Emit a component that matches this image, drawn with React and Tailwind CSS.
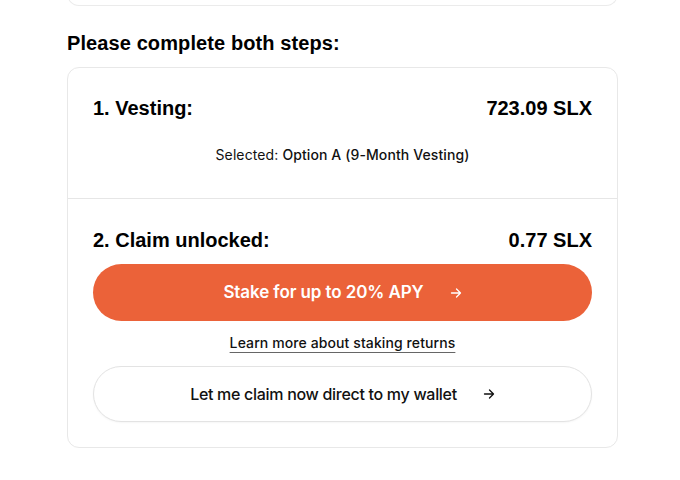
import React from 'react';

function Arrow({ className }) {
  return (
    <svg viewBox="0 0 12 12" className={className} fill="none" stroke="currentColor" strokeWidth="1.3" strokeLinecap="round" strokeLinejoin="round">
      <path d="M1.5 6h9M6.5 2l4 4-4 4" />
    </svg>
  );
}

export default function App() {
  const heading = { fontFamily: '"Liberation Sans", Arial, sans-serif' };
  const body = { fontFamily: 'Inter, "Noto Sans", sans-serif' };

  return (
    <div className="min-h-[480px] bg-white text-black" style={body}>
      <div className="ml-[67px] w-[551px]">
        {/* previous card peeking from the top */}
        <div className="-mt-[20px] h-[26px] rounded-b-xl border-x border-b border-[#ebebeb]" />

        <h2 className="mt-[23px] text-[20px] leading-[28px] font-bold tracking-[0.1px]" style={heading}>
          Please complete both steps:
        </h2>

        <div className="mt-[10px] rounded-xl border border-[#e8e8e8]">
          {/* Step 1 */}
          <div className="px-[25px] pt-[26px] pb-[33px]">
            <div className="flex items-center justify-between text-[20px] leading-[28px] font-bold" style={heading}>
              <span>1. Vesting:</span>
              <span>723.09 SLX</span>
            </div>
            <p className="mt-[23px] text-center text-[14px] leading-[20px] tracking-[0.1px] text-[#111]">
              Selected: <span className="font-medium">Option A (9-Month Vesting)</span>
            </p>
          </div>

          <div className="h-px bg-[#e6e6e6]" />

          {/* Step 2 */}
          <div className="px-[25px] pt-[27px] pb-[25px]">
            <div className="flex items-center justify-between text-[20px] leading-[28px] font-bold" style={heading}>
              <span>2. Claim unlocked:</span>
              <span>0.77 SLX</span>
            </div>

            <button className="mt-[10px] flex h-[57px] w-full items-center justify-center gap-[26px] rounded-full bg-[#eb6239] text-[17px] font-semibold tracking-[-0.1px] text-white">
              <span>Stake for up to 20% APY</span>
              <Arrow className="h-[12px] w-[12px]" />
            </button>

            <div className="mt-[12px] text-center text-[14px] leading-[20px] tracking-[0.1px]">
              <a className="font-medium text-[#111] underline decoration-[#666] underline-offset-[4px]">
                Learn more about staking returns
              </a>
            </div>

            <button className="mt-[13px] flex h-[56px] w-full items-center justify-center gap-[26px] rounded-full border border-[#e3e3e3] bg-white text-[16px] font-medium tracking-[-0.3px] text-[#111] shadow-[0_1px_2px_rgba(0,0,0,0.04)]">
              <span>Let me claim now direct to my wallet</span>
              <Arrow className="h-[12px] w-[12px]" />
            </button>
          </div>
        </div>
      </div>
    </div>
  );
}
